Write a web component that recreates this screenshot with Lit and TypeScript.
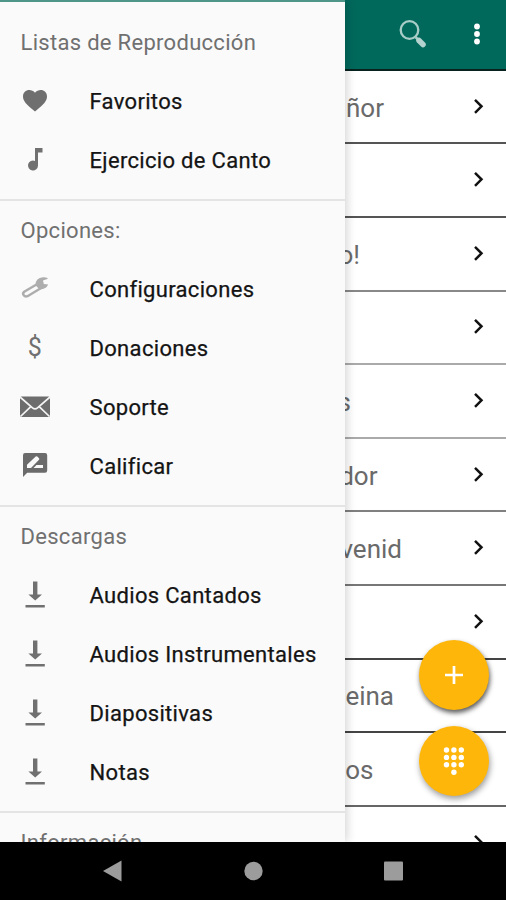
import { LitElement, html, css, svg } from "lit";
import { customElement } from "lit/decorators.js";

const icons: Record<string, unknown> = {
  heart: svg`<path fill="#6f6f6f" d="M18 28.500 16.200 26.900C9.600 21.300 6 18 6 13.400 6 9.700 8.800 7 12.300 7c2.100 0 4.300 1 5.700 2.700C19.400 8 21.600 7 23.700 7 27.200 7 30 9.700 30 13.400c0 4.600-3.600 7.900-10.200 13.500z"/>`,
  note: svg`<path fill="#707070" d="M18 6h7.500v4.500H21V23.500a5 5 0 1 1-3-4.600z"/>`,
  wrench: svg`<path fill="none" stroke="#adadad" stroke-width="2.400" stroke-linejoin="round" d="M7.200 20.800 19.500 13.500l3.800 4L10.500 25.200C7.500 26.500 4.500 23 7.200 20.800z"/><path fill="#adadad" d="M18.500 14Q18.500 7 26 6.300q4.500-.3 5 1.500l-5 1.700.8 3.600 4.400.4q-2 4.500-8 5z"/>`,
  mail: svg`<rect x="3" y="7.500" width="30" height="20.500" rx="1.500" fill="#6d6d6d"/><path d="M3 8 15.500 18.800q2.500 2 5 0L33 8M3.500 27.500 13.800 17.600M32.500 27.500 22.200 17.600" fill="none" stroke="#f5f5f5" stroke-width="1.700"/>`,
  rate: svg`<path fill="#6b6b6b" d="M8 5h20q2.200 0 2.200 2.200V22.500q0 2.200-2.200 2.200H10.200L6 29V7.200Q6 5 8 5z"/><path fill="#fafafa" d="M10 20v-3.200l8.700-8.300q.8-.7 1.600 0l1.700 1.700q.7.800 0 1.500L14 20zM16.500 20l3-3H26v3z"/>`,
  down: svg`<path fill="#707070" d="M16 4.500h4.400v13h4.600L18.200 23.500 11.400 17.500H16zM8.500 28h19.300v2.500H8.500z"/>`,
};

type Item = [string, string];
const sections: { title: string; items: Item[] }[] = [
  { title: "Listas de Reproducción", items: [["heart", "Favoritos"], ["note", "Ejercicio de Canto"]] },
  {
    title: "Opciones:",
    items: [["wrench", "Configuraciones"], ["$", "Donaciones"], ["mail", "Soporte"], ["rate", "Calificar"]],
  },
  {
    title: "Descargas",
    items: [["down", "Audios Cantados"], ["down", "Audios Instrumentales"], ["down", "Diapositivas"], ["down", "Notas"]],
  },
  { title: "Información", items: [] },
];

// Visible tail of each hymn title, where it ends, and the tone of the rule below.
const songs: [string, number, string][] = [
  ["ñor", 384, "#555"],
  ["", 384, "#555"],
  ["o!", 360, "#888"],
  ["", 384, "#aaa"],
  ["s", 351, "#aaa"],
  ["dor", 377.5, "#808080"],
  ["venid", 402, "#777"],
  ["", 384, "#444"],
  ["eina", 394, "#444"],
  ["os", 373.5, "#666"],
  ["", 384, "#666"],
];

@customElement("app-root")
export class AppRoot extends LitElement {
  static styles = css`
    :host {
      display: block;
      position: relative;
      width: 506px;
      height: 900px;
      overflow: hidden;
      background: #fff;
      font-family: Roboto, "Liberation Sans", sans-serif;
    }
    * { box-sizing: border-box; }
    svg { display: block; flex: none; }
    .page { height: 842px; overflow: hidden; }
    .bar {
      height: 70.800px;
      background: #00695c;
      border-bottom: 2px solid #08221e;
      display: flex;
      justify-content: flex-end;
      align-items: center;
      padding-right: 19px;
    }
    .bar .find { margin-right: 39px; }
    .song {
      height: 73.600px;
      display: flex;
      align-items: center;
      justify-content: space-between;
      border-bottom: 2px solid;
      padding-right: 20px;
    }
    .name {
      text-align: right;
      font-size: 26px;
      line-height: 30px;
      color: #6a6a6a;
      padding-top: 2px;
      white-space: nowrap;
    }
    .drawer {
      position: absolute;
      left: 0;
      top: 0;
      width: 345px;
      height: 842px;
      overflow: hidden;
      background: #fafafa;
      border-top: 2px solid #4f9688;
      padding-top: 10.500px;
      box-shadow: 1px 0 10px rgba(0, 0, 0, 0.2);
    }
    .group { border-bottom: 2px solid #e4e4e4; padding-bottom: 9.300px; }
    .group:last-child { border: 0; }
    .title, .item {
      height: 59px;
      display: flex;
      align-items: center;
      white-space: nowrap;
    }
    .title { padding-left: 20.500px; font-size: 22px; color: #707070; letter-spacing: 0.300px; }
    .item { padding-left: 17px; font-size: 22px; color: #141414; letter-spacing: 0.320px; -webkit-text-stroke: 0.250px #141414; }
    .item svg { margin-top: -1px; }
    .item .label { margin-left: 36.500px; }
    .dollar { width: 36px; text-align: center; font-size: 25px; color: #707070; -webkit-text-stroke: 0; line-height: 30px; }
    .fab {
      position: absolute;
      left: 419px;
      width: 70px;
      height: 70px;
      border-radius: 50%;
      background: #ffb60a;
      display: grid;
      place-items: center;
    }
    .add { top: 640px; box-shadow: 1px 3px 5px rgba(0, 0, 0, 0.65); }
    .dial { top: 726px; left: 418.500px; box-shadow: 1px 3px 6px rgba(0, 0, 0, 0.4); }
    .nav { height: 58px; background: #000; display: flex; align-items: center; }
  `;

  render() {
    return html`
      <div class="page">
        <div class="bar">
          <svg class="find" width="30" height="30" viewBox="0 0 30 30">
            <circle cx="11.500" cy="11" r="8.800" fill="none" stroke="#a8cdc7" stroke-width="2.300" />
            <path d="M17.500 18 20 20.500" stroke="#a8cdc7" stroke-width="2.500" />
            <path d="m21 21.500 4 4" stroke="#b5d3ce" stroke-width="5.500" stroke-linecap="round" />
          </svg>
          <svg width="20" height="24" viewBox="0 0 20 24" fill="#fff">
            <circle cx="10" cy="4.500" r="2.900" /><circle cx="10" cy="12" r="2.900" /><circle cx="10" cy="19.500" r="2.900" />
          </svg>
        </div>
        ${songs.map(
          ([name, end, line]) => html`
            <div class="song" style="border-color:${line}">
              <div class="name" style="width:${end}px">${name}</div>
              <svg width="16" height="20" viewBox="0 0 16 20">
                <path d="m5 2.800 6.500 6.500L5 15.800" fill="none" stroke="#111" stroke-width="2.500" />
              </svg>
            </div>
          `
        )}
      </div>
      <div class="fab add">
        <svg width="20" height="20" viewBox="0 0 20 20">
          <path d="M10 1v18M1 10h18" stroke="#fff" stroke-width="2.700" />
        </svg>
      </div>
      <div class="fab dial">
        <svg width="24" height="30" viewBox="0 0 24 30" fill="#fff">
          ${[0, 1, 2].map((r) => [0, 1, 2].map((c) => svg`<circle cx=${4.500 + c * 7.400} cy=${4 + r * 7.400} r="2.700" />`))}
          <circle cx="11.900" cy="26.200" r="2.700" />
        </svg>
      </div>
      <div class="drawer">
        ${sections.map(
          (s) => html`
            <div class="group">
              <div class="title">${s.title}</div>
              ${s.items.map(
                ([icon, label]) => html`
                  <div class="item">
                    ${icon === "$"
                      ? html`<span class="dollar">$</span>`
                      : html`<svg width="36" height="36" viewBox="0 0 36 36">${icons[icon]}</svg>`}
                    <span class="label">${label}</span>
                  </div>
                `
              )}
            </div>
          `
        )}
      </div>
      <div class="nav">
        <svg width="506" height="58" viewBox="0 0 506 58" fill="#9c9c9c">
          <path d="M103 29 121.500 18.500v21z" />
          <circle cx="253.500" cy="29" r="9.200" />
          <rect x="384" y="19.500" width="19" height="19" rx="1" />
        </svg>
      </div>
    `;
  }
}
